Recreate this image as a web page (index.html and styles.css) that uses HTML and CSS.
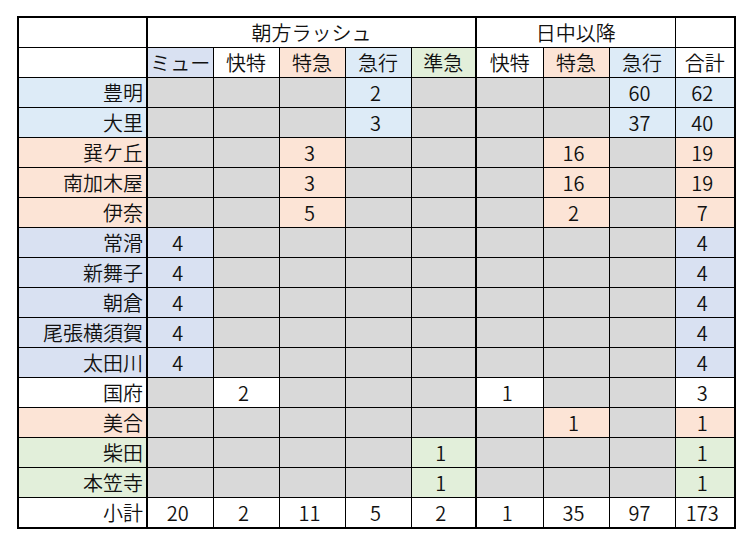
FILE: index.html
```html
<!DOCTYPE html>
<html lang="ja">
<head>
<meta charset="utf-8">
<link rel="stylesheet" href="styles.css">
</head>
<body>
<table class="grid">
  <colgroup>
    <col class="c-label"><col class="c-66"><col class="c-66"><col class="c-66"><col class="c-66"><col class="c-65"><col class="c-67"><col class="c-66"><col class="c-66"><col class="c-60">
  </colgroup>
  <tr>
    <td class="lab"></td>
    <td class="hd sep" colspan="5">朝方ラッシュ</td>
    <td class="hd" colspan="3">日中以降</td>
    <td class="hd"></td>
  </tr>
  <tr>
    <td class="lab"></td>
    <td class="hd lav">ミュー</td>
    <td class="hd">快特</td>
    <td class="hd pch">特急</td>
    <td class="hd blu">急行</td>
    <td class="hd grn sep">準急</td>
    <td class="hd">快特</td>
    <td class="hd pch">特急</td>
    <td class="hd blu">急行</td>
    <td class="hd">合計</td>
  </tr>
  <tr>
    <td class="lab blu">豊明</td>
    <td class="gy"></td><td class="gy"></td><td class="gy"></td><td class="n blu">2</td><td class="gy sep"></td>
    <td class="gy"></td><td class="gy"></td><td class="n blu">60</td><td class="n blu">62</td>
  </tr>
  <tr>
    <td class="lab blu">大里</td>
    <td class="gy"></td><td class="gy"></td><td class="gy"></td><td class="n blu">3</td><td class="gy sep"></td>
    <td class="gy"></td><td class="gy"></td><td class="n blu">37</td><td class="n blu">40</td>
  </tr>
  <tr>
    <td class="lab pch">巽ケ丘</td>
    <td class="gy"></td><td class="gy"></td><td class="n pch">3</td><td class="gy"></td><td class="gy sep"></td>
    <td class="gy"></td><td class="n pch">16</td><td class="gy"></td><td class="n pch">19</td>
  </tr>
  <tr>
    <td class="lab pch">南加木屋</td>
    <td class="gy"></td><td class="gy"></td><td class="n pch">3</td><td class="gy"></td><td class="gy sep"></td>
    <td class="gy"></td><td class="n pch">16</td><td class="gy"></td><td class="n pch">19</td>
  </tr>
  <tr>
    <td class="lab pch">伊奈</td>
    <td class="gy"></td><td class="gy"></td><td class="n pch">5</td><td class="gy"></td><td class="gy sep"></td>
    <td class="gy"></td><td class="n pch">2</td><td class="gy"></td><td class="n pch">7</td>
  </tr>
  <tr>
    <td class="lab lav">常滑</td>
    <td class="n lav">4</td><td class="gy"></td><td class="gy"></td><td class="gy"></td><td class="gy sep"></td>
    <td class="gy"></td><td class="gy"></td><td class="gy"></td><td class="n lav">4</td>
  </tr>
  <tr>
    <td class="lab lav">新舞子</td>
    <td class="n lav">4</td><td class="gy"></td><td class="gy"></td><td class="gy"></td><td class="gy sep"></td>
    <td class="gy"></td><td class="gy"></td><td class="gy"></td><td class="n lav">4</td>
  </tr>
  <tr>
    <td class="lab lav">朝倉</td>
    <td class="n lav">4</td><td class="gy"></td><td class="gy"></td><td class="gy"></td><td class="gy sep"></td>
    <td class="gy"></td><td class="gy"></td><td class="gy"></td><td class="n lav">4</td>
  </tr>
  <tr>
    <td class="lab lav">尾張横須賀</td>
    <td class="n lav">4</td><td class="gy"></td><td class="gy"></td><td class="gy"></td><td class="gy sep"></td>
    <td class="gy"></td><td class="gy"></td><td class="gy"></td><td class="n lav">4</td>
  </tr>
  <tr>
    <td class="lab lav">太田川</td>
    <td class="n lav">4</td><td class="gy"></td><td class="gy"></td><td class="gy"></td><td class="gy sep"></td>
    <td class="gy"></td><td class="gy"></td><td class="gy"></td><td class="n lav">4</td>
  </tr>
  <tr>
    <td class="lab">国府</td>
    <td class="gy"></td><td class="n">2</td><td class="gy"></td><td class="gy"></td><td class="gy sep"></td>
    <td class="n">1</td><td class="gy"></td><td class="gy"></td><td class="n">3</td>
  </tr>
  <tr>
    <td class="lab pch">美合</td>
    <td class="gy"></td><td class="gy"></td><td class="gy"></td><td class="gy"></td><td class="gy sep"></td>
    <td class="gy"></td><td class="n pch">1</td><td class="gy"></td><td class="n pch">1</td>
  </tr>
  <tr>
    <td class="lab grn">柴田</td>
    <td class="gy"></td><td class="gy"></td><td class="gy"></td><td class="gy"></td><td class="n grn sep">1</td>
    <td class="gy"></td><td class="gy"></td><td class="gy"></td><td class="n grn">1</td>
  </tr>
  <tr>
    <td class="lab grn">本笠寺</td>
    <td class="gy"></td><td class="gy"></td><td class="gy"></td><td class="gy"></td><td class="n grn sep">1</td>
    <td class="gy"></td><td class="gy"></td><td class="gy"></td><td class="n grn">1</td>
  </tr>
  <tr>
    <td class="lab">小計</td>
    <td class="n">20</td><td class="n">2</td><td class="n">11</td><td class="n">5</td><td class="n sep">2</td>
    <td class="n">1</td><td class="n">35</td><td class="n">97</td><td class="n">173</td>
  </tr>
</table>
</body>
</html>
```
FILE: styles.css
```css
html, body {
  margin: 0;
  padding: 0;
  background: #ffffff;
}
body {
  padding: 16px 0 0 17px;
  font-family: "Noto Sans CJK JP", "Noto Sans", sans-serif;
  font-size: 20px;
  font-weight: 350;
  color: #111111;
}
.grid {
  border-collapse: collapse;
  table-layout: fixed;
  width: 719px;
  border: 2px solid #000;
}
.c-label { width: 129px; }
.c-66 { width: 66px; }
.c-65 { width: 65px; }
.c-67 { width: 67px; }
.c-60 { width: 60px; }
.grid td {
  border: 1px solid #000;
  height: 29px;
  padding: 0;
  line-height: 29px;
  white-space: nowrap;
  overflow: hidden;
}
.grid td.lab {
  text-align: right;
  padding-right: 3px;
  border-right: 2px solid #000;
}
.grid td.hd {
  text-align: center;
}
.grid td.n {
  text-align: center;
  padding-right: 5px;
}
.grid td.sep {
  border-right: 2px solid #000;
}
.gy { background: #d9d9d9; }
.blu { background: #ddebf7; }
.lav { background: #d9e1f2; }
.pch { background: #fce4d6; }
.grn { background: #e2efda; }
```
